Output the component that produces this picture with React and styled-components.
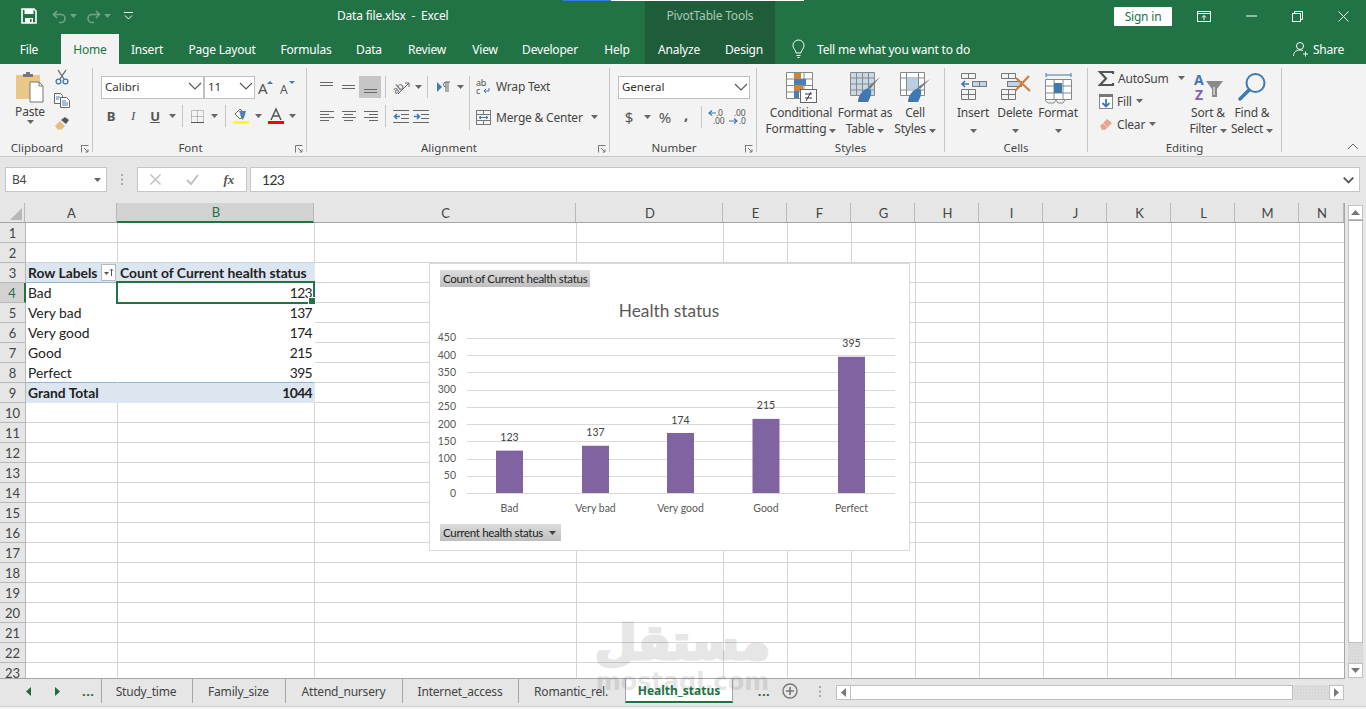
import React from "react";
import styled, { createGlobalStyle } from "styled-components";

const GREEN = "#217346";
const UI = '"Noto Sans", "Open Sans", sans-serif';
const CELL = 'Lato, "Liberation Sans", sans-serif';

const Global = createGlobalStyle`
  html, body { margin: 0; padding: 0; height: 100%; overflow: hidden; background: #f3f3f3; }
  * { box-sizing: border-box; }
  svg { overflow: visible; }
`;

const Page = styled.div`
  position: relative;
  width: 1366px;
  height: 709px;
  overflow: hidden;
  font-family: ${UI};
  font-size: 12px;
  letter-spacing: -0.2px;
  color: #444;
  display: flex;
  flex-direction: column;
`;

const LoadStrip = styled.div`
  position: absolute;
  top: 0;
  left: 563px;
  width: 241px;
  height: 1px;
  background: linear-gradient(90deg, #2a7fe0 0 48px, #fff 48px);
  z-index: 3;
`;

/* title bar */
const TitleBar = styled.div`
  height: 32px;
  background: ${GREEN};
  color: #fff;
  display: flex;
  align-items: center;
`;
const Qat = styled.div`
  width: 337px;
  display: flex;
  align-items: center;
  padding-left: 21px;
`;
const QatSlot = styled.span`
  width: ${(p) => p.$w}px;
  margin-left: ${(p) => p.$ml || 0}px;
  display: flex;
  justify-content: center;
`;
const DocTitle = styled.div`
  width: 308px;
  white-space: pre;
  padding-bottom: 2px;
`;
const Context = styled.div`
  width: 130px;
  height: 32px;
  background: #1e5c3a;
  color: #a9c9b6;
  display: flex;
  align-items: center;
  justify-content: center;
  padding-bottom: 2px;
`;
const SignIn = styled.div`
  margin-left: 339px;
  width: 58px;
  height: 19px;
  background: #fff;
  color: ${GREEN};
  border-radius: 1px;
  display: flex;
  align-items: center;
  justify-content: center;
`;
const WinBtn = styled.div`
  width: ${(p) => p.$w || 46}px;
  display: flex;
  justify-content: center;
`;

/* ribbon tabs */
const TabRow = styled.div`
  height: 32px;
  background: ${GREEN};
  color: #fff;
  display: flex;
  align-items: flex-end;
`;
const Tab = styled.div`
  width: ${(p) => p.$w}px;
  height: ${(p) => (p.$on ? 30 : 32)}px;
  padding-right: ${(p) => (p.$w === 61 ? 3 : 0)}px;
  padding-top: ${(p) => (p.$on ? 0 : 2)}px;
  background: ${(p) => (p.$on ? "#f3f3f3" : p.$ctx ? "#1e5c3a" : "transparent")};
  color: ${(p) => (p.$on ? GREEN : "#fff")};
  display: flex;
  align-items: center;
  justify-content: center;
  white-space: nowrap;
`;
const TellMe = styled.div`
  display: flex;
  align-items: center;
  height: 32px;
  padding-top: 2px;
  margin-left: 17px;
  gap: 12px;
`;
const Share = styled.div`
  display: flex;
  align-items: center;
  height: 32px;
  padding-top: 2px;
  margin-left: 323px;
  gap: 4px;
`;

/* ribbon */
const Ribbon = styled.div`
  height: 93px;
  background: #f3f3f3;
  border-bottom: 1px solid #c8c8c8;
  display: flex;
  padding-top: 4px;
  position: relative;
`;
const GroupBox = styled.section`
  width: ${(p) => p.$w}px;
  height: 84px;
  border-right: 1px solid #c6c6c6;
  display: flex;
  flex-direction: column;
`;
const GroupBody = styled.div`
  height: 72px;
  display: flex;
  padding-left: ${(p) => p.$pad || 0}px;
  padding-top: ${(p) => p.$top ?? 8}px;
`;
const GroupFoot = styled.div`
  height: 12px;
  display: flex;
  line-height: 16px;
`;
const GroupName = styled.div`
  flex: 1;
  text-align: center;
  font-size: 11.5px;
  letter-spacing: 0;
  white-space: nowrap;
`;
const Launcher = styled.div`
  width: 18px;
  height: 12px;
  padding-top: 5px;
  padding-left: 7px;
  display: flex;
  align-items: flex-start;
`;
const Collapse = styled.div`
  position: absolute;
  right: 7px;
  bottom: 2px;
`;
const Rows = styled.div`
  display: flex;
  flex-direction: column;
  gap: ${(p) => p.$gap ?? 8}px;
  margin-top: ${(p) => p.$mt || 0}px;
`;
const Row = styled.div`
  display: flex;
  align-items: center;
  height: 22px;
`;
const Slot = styled.span`
  width: ${(p) => p.$w}px;
  height: 22px;
  flex: none;
  display: flex;
  align-items: center;
  justify-content: center;
  padding-left: ${(p) => p.$pl || 0}px;
  padding-bottom: ${(p) => p.$pb || 0}px;
  background: ${(p) => (p.$on ? "#c6c6c6" : "transparent")};
`;
const Sep = styled.span`
  width: 1px;
  height: ${(p) => p.$h || 22}px;
  background: #c6c6c6;
  flex: none;
  margin: 0 ${(p) => p.$m ?? 4}px;
`;
const Select = styled.div`
  width: ${(p) => p.$w}px;
  height: 23px;
  flex: none;
  margin-left: ${(p) => p.$ml || 0}px;
  background: #fff;
  border: 1px solid #c0c0c0;
  color: #333;
  display: flex;
  align-items: center;
  justify-content: space-between;
  padding: 0 1px 2px 3px;
  font-size: 11.5px;
  letter-spacing: 0;
`;
const Big = styled.div`
  width: ${(p) => p.$w}px;
  flex: none;
  display: flex;
  flex-direction: column;
  align-items: center;
  white-space: nowrap;
  line-height: 16px;
  color: #444;
  padding-top: ${(p) => p.$top || 0}px;
`;
const BigIcon = styled.div`
  height: 33px;
  display: flex;
  align-items: flex-start;
  justify-content: center;
`;
const SmallCol = styled.div`
  display: flex;
  flex-direction: column;
  gap: 1px;
  width: ${(p) => p.$w}px;
  flex: none;
  margin-top: ${(p) => p.$mt || 0}px;
  margin-left: ${(p) => p.$ml || 0}px;
`;
const TextRow = styled.div`
  display: flex;
  align-items: center;
  height: 22px;
  gap: ${(p) => p.$gap ?? 4}px;
  white-space: nowrap;
`;
const Name = styled.span`
  white-space: nowrap;
`;

/* formula bar */
const FormulaBar = styled.div`
  height: 46px;
  background: #e6e6e6;
  display: flex;
  align-items: center;
  padding: 0 6px 1px 5px;
`;
const FxBox = styled.div`
  height: 25px;
  background: #fff;
  border: 1px solid #c6c6c6;
  display: flex;
  align-items: center;
`;
const NameBox = styled(FxBox)`
  width: 102px;
  justify-content: space-between;
  padding: 0 5px 0 6px;
  color: #444;
`;
const Grip = styled.div`
  width: 30px;
  display: flex;
  justify-content: center;
`;
const Buttons = styled(FxBox)`
  width: 110px;
  justify-content: space-between;
  padding: 0 12px;
  margin-right: 3px;
`;
const Input = styled(FxBox)`
  flex: 1;
  padding: 0 5px 0 11px;
  justify-content: space-between;
  font-family: ${CELL};
  font-size: 13.8px;
  letter-spacing: -0.6px;
  color: #333;
`;

/* sheet */
const SheetArea = styled.div`
  height: 476px;
  display: flex;
  background: #e6e6e6;
  position: relative;
`;
const Grid = styled.div`
  width: 1345px;
  height: 476px;
  overflow: hidden;
  background: #fff;
  border-right: 1px solid #a6a6a6;
  border-bottom: 1px solid #a6a6a6;
  font-family: ${CELL};
  font-size: 13.85px;
  letter-spacing: 0;
  color: #222;
`;
const HeadRow = styled.div`
  display: flex;
  height: 20px;
  background: #e6e6e6;
  border-bottom: 1px solid #a6a6a6;
`;
const Corner = styled.div`
  width: 26px;
  border-right: 1px solid #b8b8b8;
  display: flex;
  align-items: flex-end;
  justify-content: flex-end;
  padding: 0 2px 2px 0;
`;
const ColHead = styled.div`
  width: ${(p) => p.$w}px;
  flex: none;
  height: ${(p) => (p.$on ? 20 : 19)}px;
  display: flex;
  align-items: center;
  justify-content: center;
  padding-left: 2px;
  font-size: 13px;
  color: ${(p) => (p.$on ? GREEN : "#444")};
  background: ${(p) => (p.$on ? "#d2d2d2" : "transparent")};
  border-right: 1px solid #b8b8b8;
  border-bottom: ${(p) => (p.$on ? `2px solid ${GREEN}` : "none")};
`;
const SheetRow = styled.div`
  display: flex;
  height: 20px;
  flex: none;
`;
const RowHead = styled.div`
  width: 26px;
  flex: none;
  display: flex;
  align-items: center;
  justify-content: center;
  font-size: 13px;
  color: ${(p) => (p.$on ? GREEN : "#444")};
  background: ${(p) => (p.$on ? "#d2d2d2" : "#e6e6e6")};
  border-right: ${(p) => (p.$on ? `2px solid ${GREEN}` : "1px solid #b8b8b8")};
  border-bottom: 1px solid #b8b8b8;
`;
const Cell = styled.div`
  position: relative;
  width: ${(p) => p.$w}px;
  flex: none;
  display: flex;
  align-items: center;
  justify-content: ${(p) => (p.$right ? "flex-end" : "space-between")};
  padding: 0 2px;
  white-space: nowrap;
  letter-spacing: ${(p) => (p.$right ? "-0.6px" : "0")};
  font-weight: ${(p) => (p.$bold ? 700 : 400)};
  background: ${(p) => (p.$fill ? "#dce6f1" : "#fff")};
  border-right: 1px solid ${(p) => (p.$pivot ? "transparent" : "#d4d4d4")};
  border-bottom: 1px solid ${(p) => p.$line || (p.$pivot ? "transparent" : "#d4d4d4")};
`;
const Selection = styled.div`
  position: absolute;
  inset: -2px -1px -2px -2px;
  border: 2px solid ${GREEN};
  z-index: 1;
  &::after {
    content: "";
    position: absolute;
    right: -3px;
    bottom: -3px;
    width: 6px;
    height: 6px;
    background: ${GREEN};
    border: 1px solid #fff;
  }
`;
const FilterBtn = styled.span`
  width: 15px;
  height: 17px;
  margin-right: -1px;
  background: #fff;
  border: 1px solid #b8b8b8;
  display: flex;
  align-items: center;
  justify-content: center;
`;

/* chart */
const ChartBox = styled.div`
  position: absolute;
  left: 429px;
  top: 60px;
  width: 481px;
  height: 288px;
  background: #fff;
  border: 1px solid #d9d9d9;
  display: flex;
  flex-direction: column;
  padding: 6px 9px 0 10px;
  z-index: 2;
  letter-spacing: 0;
`;
const FieldBtn = styled.div`
  align-self: flex-start;
  width: ${(p) => p.$w}px;
  height: 17px;
  background: linear-gradient(#dcdcdc, #bfbfbf);
  display: flex;
  align-items: center;
  gap: 6px;
  padding-left: 3px;
  font-family: ${CELL};
  font-size: 11.5px;
  letter-spacing: -0.3px;
  color: #222;
  white-space: nowrap;
`;
const ChartTitle = styled.div`
  height: 20px;
  margin-top: 14px;
  padding-right: 2px;
  text-align: center;
  line-height: 20px;
  font-family: ${CELL};
  font-size: 17.3px;
  color: #595959;
`;
const Plot = styled.svg`
  display: block;
  margin: 9px -9px 6px -10px;
  font-family: ${CELL};
  font-size: 10.5px;
  fill: #595959;
`;

/* vertical scrollbar */
const VScroll = styled.div`
  width: 21px;
  display: flex;
  flex-direction: column;
  padding: 2px 3px 1px;
`;
const ScrollBtn = styled.div`
  width: ${(p) => p.$w || 15}px;
  height: ${(p) => p.$h || 15}px;
  flex: none;
  background: #fff;
  border: 1px solid #c0c0c0;
  display: flex;
  align-items: center;
  justify-content: center;
`;
const VThumb = styled.div`
  height: 423px;
  background: #fff;
  border: 1px solid #c0c0c0;
  border-top: 1px solid #a6a6a6;
`;
const Track = styled.div`
  flex: 1;
  background-color: #dcdcdc;
  background-image: radial-gradient(#cfcfcf 0.6px, transparent 0.7px);
  background-size: 3px 3px;
`;

/* sheet tabs */
const TabBar = styled.div`
  height: 27px;
  background: #e6e6e6;
  display: flex;
  align-items: flex-start;
`;
const NavBox = styled.div`
  width: 101px;
  height: 24px;
  display: flex;
  align-items: center;
  padding-left: 26px;
  gap: 22px;
  color: #1e6b3c;
`;
const Dots = styled.span`
  font-weight: 700;
  font-size: 13px;
  color: #1e6b3c;
  line-height: 1;
  letter-spacing: 0.5px;
`;
const SheetTab = styled.div`
  width: ${(p) => p.$w}px;
  height: 24px;
  flex: none;
  display: flex;
  align-items: center;
  justify-content: center;
  padding-right: ${(p) => (p.$on ? 0 : 2)}px;
  white-space: nowrap;
  color: ${(p) => (p.$on ? GREEN : "#444")};
  background: ${(p) => (p.$on ? "#fff" : "transparent")};
  font-weight: ${(p) => (p.$on ? 700 : 400)};
  letter-spacing: ${(p) => (p.$on ? "0" : "-0.2px")};
  border-left: 1px solid ${(p) => (p.$first || p.$on ? "#a6a6a6" : "transparent")};
  border-right: 1px solid ${(p) => (p.$noSep ? "transparent" : "#a6a6a6")};
  border-bottom: ${(p) => (p.$on ? `2px solid ${GREEN}` : "none")};
`;
const TabTools = styled.div`
  display: flex;
  align-items: center;
  height: 24px;
`;
const HScroll = styled.div`
  display: flex;
  margin-top: 6px;
  width: 508px;
  height: 15px;
`;
const HThumb = styled.div`
  width: 442px;
  background: #fff;
  border: 1px solid #c0c0c0;
  border-left: none;
`;
const Foot = styled.div`
  height: 3px;
  background: #f3f3f3;
  border-top: 1px solid #d0d0d0;
`;

/* watermark */
const Watermark = styled.div`
  position: absolute;
  left: 580px;
  top: 612px;
  width: 205px;
  display: flex;
  flex-direction: column;
  align-items: center;
  pointer-events: none;
  z-index: 4;
  color: #464646;
  opacity: 0.13;
  font-family: "DejaVu Sans", sans-serif;
  font-weight: 700;
  letter-spacing: 0;
`;
const WmArabic = styled.div`
  font-size: 48px;
  line-height: 60px;
  -webkit-text-stroke: 3px #464646;
  paint-order: stroke fill;
`;
const WmLatin = styled.div`
  font-size: 24px;
  line-height: 28px;
  margin-top: -4px;
`;

/* drawings */
const Caret = ({ c = "#666" }) => (
  <svg width="7" height="4" viewBox="0 0 7 4"><path d="M0 0h7L3.5 4z" fill={c} /></svg>
);
const Chevron = ({ w = 14, sw = 1.1 }) => (
  <svg width={w} height="8" viewBox="0 0 14 8"><path d="M1 1l6 6 6-6" fill="none" stroke="#555" strokeWidth={sw} /></svg>
);
const SaveIcon = () => (
  <svg width="16" height="16" viewBox="0 0 16 16">
    <path d="M1 1h12l2 2v12H1z" fill="none" stroke="#fff" strokeWidth="1.6" />
    <rect x="3.5" y="1" width="9" height="5" fill="#fff" />
    <rect x="4" y="10" width="8" height="5" fill="#fff" />
    <rect x="9" y="11" width="1.6" height="3" fill={GREEN} />
  </svg>
);
const Undo = ({ flip }) => (
  <svg width="15" height="13" viewBox="0 0 15 13" style={flip ? { transform: "scaleX(-1)" } : undefined}>
    <path d="M5 1L1.5 4.5 5 8M2 4.5h7a4 4 0 0 1 0 8H7" fill="none" stroke="#6fa587" strokeWidth="1.6" />
  </svg>
);
const Customize = () => (
  <svg width="9" height="8" viewBox="0 0 9 8">
    <path d="M0 .5h9" stroke="#fff" />
    <path d="M1 3.5l3.5 3.5L8 3.5" fill="none" stroke="#fff" />
  </svg>
);
const RibbonDisplay = () => (
  <svg width="14" height="11" viewBox="0 0 14 11" fill="none" stroke="#fff">
    <rect x=".5" y=".5" width="13" height="10" />
    <path d="M1 2.5h12M7 9V4.500M5 6.500l2-2 2 2" />
  </svg>
);
const Minimize = () => <svg width="11" height="2" viewBox="0 0 11 2"><path d="M0 1h11" stroke="#fff" /></svg>;
const Restore = () => (
  <svg width="11" height="11" viewBox="0 0 11 11" fill="none" stroke="#fff">
    <rect x=".5" y="2.5" width="8" height="8" />
    <path d="M2.5 2.5v-2h8v8h-2" />
  </svg>
);
const CloseX = () => <svg width="11" height="11" viewBox="0 0 11 11"><path d="M.5.5l10 10M10.5.5l-10 10" stroke="#fff" /></svg>;
const Bulb = () => (
  <svg width="13" height="18" viewBox="0 0 13 18" fill="none" stroke="#fff">
    <path d="M4 13c0-3-3-4-3-7.5a5.500 5.500 0 0 1 11 0C12 9 9 10 9 13zM4.500 15.500h4M5.500 17.500h2" />
  </svg>
);
const Person = () => (
  <svg width="16" height="16" viewBox="0 0 16 16" fill="none" stroke="#fff">
    <circle cx="7" cy="5" r="3.5" />
    <path d="M.5 15c0-3.500 2.500-6 6.500-6 1 0 2 .2 2.800.6M12.500 10.500v5M10 13h5" />
  </svg>
);
const PasteIcon = () => (
  <svg width="30" height="32" viewBox="0 0 30 32">
    <rect x="1" y="4" width="24" height="24" rx="1" fill="#e9c887" />
    <path d="M8 3h3V1h4v2h3v3H8z" fill="#777" />
    <path d="M15 11h9l4 4v16H15z" fill="#fff" stroke="#777" />
    <path d="M24 11v4h4" fill="none" stroke="#777" />
  </svg>
);
const CutIcon = () => (
  <svg width="14" height="16" viewBox="0 0 14 16" fill="none">
    <path d="M3 1l6 9M11 1L5 10" stroke="#666" strokeWidth="1.3" />
    <circle cx="3.5" cy="12.5" r="2.4" stroke="#3f79b3" strokeWidth="1.3" />
    <circle cx="10.5" cy="12.5" r="2.4" stroke="#3f79b3" strokeWidth="1.3" />
  </svg>
);
const CopyIcon = () => (
  <svg width="16" height="15" viewBox="0 0 16 15" fill="#fff" stroke="#666">
    <path d="M.5.500h6l2 2v8h-8z" />
    <path d="M6.500 4.500h6l3 3v7h-9z" />
    <path d="M2 4h4M2 6h3M8 8h4M8 10h6M8 12h6" stroke="#4a7fb5" />
  </svg>
);
const PainterIcon = () => (
  <svg width="16" height="15" viewBox="0 0 16 15">
    <path d="M1 10l5-5 5 5-4 4-2-1-1 1z" fill="#e5bf7a" />
    <path d="M7 4l4-3 4 3-3 4z" fill="#555" />
  </svg>
);
const FontGrow = ({ small }) => (
  <svg width="16" height="15" viewBox="0 0 16 15">
    <text x="0" y="14" fontFamily="Noto Sans" fontSize={small ? 12 : 15} fill="#555">A</text>
    <path d={small ? "M9 1h6l-3 3z" : "M9 4h6l-3-3z"} fill="#3f79b3" />
  </svg>
);
const Letter = styled.span`
  font-family: ${(p) => (p.$serif ? '"Liberation Serif", serif' : UI)};
  font-weight: ${(p) => (p.$b ? 700 : 400)};
  font-style: ${(p) => (p.$i ? "italic" : "normal")};
  text-decoration: ${(p) => (p.$u ? "underline" : "none")};
  font-size: ${(p) => p.$size || 13}px;
  color: #555;
`;
const BorderIcon = () => (
  <svg width="13" height="13" viewBox="0 0 13 13" fill="none" stroke="#888" strokeDasharray="1 1">
    <path d="M.5.500h12v12h-12zM6.500.500v12M.5 6.500h12" />
    <path d="M0 12.500h13" stroke="#555" strokeDasharray="none" />
  </svg>
);
const FillIcon = () => (
  <svg width="16" height="16" viewBox="0 0 16 16">
    <path d="M2 6l5-5 5 5-5 5z" fill="#fff" stroke="#666" />
    <path d="M6 3h7l-2 7-2 2z" fill="#3f79b3" opacity=".9" />
    <rect y="13" width="16" height="3" fill="#ffff00" />
  </svg>
);
const FontColor = () => (
  <svg width="16" height="16" viewBox="0 0 16 16">
    <path d="M3 12L8 1l5 11M5 8h6" fill="none" stroke="#555" strokeWidth="1.5" />
    <rect y="13" width="16" height="3" fill="#ff0000" />
  </svg>
);
const Lines = ({ d }) => (
  <svg width="15" height="13" viewBox="0 0 15 13"><path d={d} stroke="#666" fill="none" /></svg>
);
const Orientation = () => (
  <svg width="18" height="17" viewBox="0 0 18 17">
    <text x="0" y="12" fontFamily="Noto Sans" fontSize="10" fill="#666" transform="rotate(-40 6 10)">ab</text>
    <path d="M5 15L16 4M12 4h4v4" fill="none" stroke="#666" />
  </svg>
);
const Rtl = () => (
  <svg width="14" height="12" viewBox="0 0 14 12">
    <path d="M0 1l5 5-5 5z" fill="#3f79b3" />
    <path d="M9 11V1h4M11 11V1M9 1a2.500 2.500 0 0 0 0 5" fill="none" stroke="#666" />
  </svg>
);
const Indent = ({ out }) => (
  <svg width="16" height="13" viewBox="0 0 16 13">
    <path d="M0 .5h16M8 4.500h8M8 8.500h8M0 12.500h16" stroke="#666" />
    <path d={out ? "M7 6.500H2M4 4L1.500 6.500 4 9" : "M1 6.500h5M4 4l2.500 2.500L4 9"} stroke="#3f79b3" strokeWidth="1.5" fill="none" />
  </svg>
);
const WrapIcon = () => (
  <svg width="14" height="15" viewBox="0 0 14 15">
    <text x="0" y="7" fontFamily="Noto Sans" fontSize="9" fill="#555">ab</text>
    <text x="0" y="15" fontFamily="Noto Sans" fontSize="9" fill="#555">c</text>
    <path d="M13 9v3H8M10 10l-2 2 2 2" fill="none" stroke="#3f79b3" />
  </svg>
);
const MergeIcon = () => (
  <svg width="15" height="15" viewBox="0 0 15 15" fill="none" stroke="#777">
    <rect x=".5" y=".5" width="14" height="14" />
    <path d="M.5 4.500h14M.5 10.500h14M7.500 1v3M7.500 11v3" />
    <path d="M3 7.500h9M3 7.500l2-1.500M3 7.500l2 1.500M12 7.500l-2-1.500M12 7.500l-2 1.500" stroke="#3f79b3" />
  </svg>
);
const DecDec = ({ more }) => (
  <svg width="20" height="16" viewBox="0 0 20 16">
    <text x={more ? 5 : 8} y="7" fontFamily="Noto Sans" fontSize="8.5" fill="#555">{more ? ".00" : ".0"}</text>
    <text x={more ? 10 : 5} y="15" fontFamily="Noto Sans" fontSize="8.5" fill="#555">{more ? ".0" : ".00"}</text>
    <path d={more ? "M0 12h8M5 9.500L8 12l-3 2.500" : "M8 4H1M4 1.500L1 4l3 2.500"} fill="none" stroke="#3f79b3" strokeWidth="1.2" />
  </svg>
);
const CondIcon = () => (
  <svg width="31" height="31" viewBox="0 0 31 31">
    <path d="M.5.500h26v26H.5zM.5 7h26M.5 13.500h26M.5 20h26M9 .5v26M18 .5v26" fill="#fff" stroke="#888" />
    <rect x="8" y="1" width="7" height="6" fill="#c9843f" />
    <rect x="8" y="7" width="12" height="6" fill="#4a7fb5" />
    <rect x="8" y="13" width="9" height="6" fill="#c9843f" />
    <rect x="8" y="19" width="5" height="7" fill="#4a7fb5" />
    <rect x="14.5" y="17.5" width="16" height="13" fill="#fff" stroke="#666" />
    <path d="M19 22h7M19 26h7M25 20l-5 9" stroke="#333" />
  </svg>
);
const TableIcon = () => (
  <svg width="31" height="31" viewBox="0 0 31 31">
    <path d="M.5.500h24v23H.5zM.5 6h24M.5 12h24M.5 18h24M6.500.5v23M12.500.5v23M18.500.5v23" fill="#c7d8e8" stroke="#888" />
    <path d="M30 5L20 17l-2-2z" fill="#777" />
    <path d="M8 30c0-7 5-12 10-14l3 2c1 4-1 8-3 12z" fill="#3f79b3" />
  </svg>
);
const StylesIcon = () => (
  <svg width="31" height="31" viewBox="0 0 31 31">
    <path d="M.5.500h24v23H.5zM.5 6h24M.5 18h24M6.500.5v23M18.500.5v23" fill="#fff" stroke="#888" />
    <rect x="7" y="6.5" width="11" height="11" fill="#b9cfe4" />
    <path d="M30 7L20 17l-2-2z" fill="#777" />
    <path d="M8 30c0-7 5-12 10-14l3 2c1 4-1 8-3 12z" fill="#3f79b3" />
  </svg>
);
const InsertIcon = () => (
  <svg width="27" height="29" viewBox="0 0 27 29" fill="none" stroke="#777">
    <path d="M1.500 1.500h14v5h-14zM8.500 1.500v5M1.500 17.500h14v10h-14zM1.500 22.500h14M8.500 17.500v10" />
    <rect x="12.5" y="9.5" width="14" height="5" fill="#c0d4e6" />
    <path d="M19.500 9.500v5" />
    <path d="M9 12H2M5 9l-3 3 3 3" stroke="#3f79b3" strokeWidth="1.6" />
  </svg>
);
const DeleteIcon = () => (
  <svg width="31" height="29" viewBox="0 0 31 29" fill="none" stroke="#777">
    <path d="M1.500 1.500h14v5h-14zM8.500 1.500v5M1.500 17.500h14v10h-14zM1.500 22.500h14M8.500 17.500v10" />
    <rect x="7.5" y="9.5" width="14" height="5" fill="#c0d4e6" />
    <path d="M16 6l14 13M29 4L15 19" stroke="#d17f3e" strokeWidth="2.2" />
  </svg>
);
const FormatIcon = () => (
  <svg width="29" height="31" viewBox="0 0 29 31" fill="none" stroke="#888">
    <path d="M2 3h25M2 1v4M27 1v4" stroke="#3f79b3" />
    <path d="M1.500 7.500h26v20h-26zM1.500 14h26M1.500 21h26M10 7.500v20M19 7.500v20" fill="#fff" />
    <rect x="10" y="11" width="8" height="10" fill="#3f79b3" stroke="none" />
    <path d="M1 28l3 3h6l2-3M12 28l2 3h5l2-3" />
  </svg>
);
const Sigma = () => (
  <svg width="15" height="15" viewBox="0 0 15 15"><path d="M14 3V1H1l6 6.500L1 14h13v-2" fill="none" stroke="#555" strokeWidth="2.2" /></svg>
);
const FillDown = () => (
  <svg width="14" height="15" viewBox="0 0 14 15">
    <rect x=".5" y=".5" width="13" height="14" fill="#fff" stroke="#888" />
    <rect width="14" height="3" fill="#777" />
    <path d="M7 5v7M3.500 9L7 12.500 10.500 9" fill="none" stroke="#3f79b3" strokeWidth="1.8" />
  </svg>
);
const Eraser = () => (
  <svg width="14" height="13" viewBox="0 0 14 13">
    <path d="M1 8l7-7 5 4-7 7H3z" fill="#eba58f" />
    <path d="M4 5l4 4" stroke="#fff" strokeDasharray="1 1" />
  </svg>
);
const SortIcon = () => (
  <svg width="32" height="29" viewBox="0 0 32 29">
    <text x="2" y="13" fontFamily="Noto Sans" fontWeight="700" fontSize="14" fill="#3f79b3">A</text>
    <text x="3" y="28" fontFamily="Noto Sans" fontWeight="700" fontSize="14" fill="#8a5fb0">Z</text>
    <path d="M14 9h17l-6 8v8h-5v-8z" fill="#8a8a8a" />
    <path d="M22 15v8" stroke="#fff" />
  </svg>
);
const FindIcon = () => (
  <svg width="29" height="29" viewBox="0 0 29 29" fill="none">
    <circle cx="17.5" cy="11" r="9" stroke="#3f79b3" strokeWidth="2" />
    <path d="M11 18L2 27" stroke="#3f79b3" strokeWidth="3.5" strokeLinecap="round" />
  </svg>
);
const LauncherIcon = () => (
  <svg width="8" height="8" viewBox="0 0 8 8" fill="none" stroke="#777">
    <path d="M.5 7.500v-7h7" />
    <path d="M3 3l4 4M7 4.500V7H4.500" />
  </svg>
);
const Up = () => <svg width="12" height="7" viewBox="0 0 12 7"><path d="M1 6l5-5 5 5" fill="none" stroke="#666" /></svg>;
const Tri = ({ dir }) => {
  const d = { up: "M0 5L4.500 0 9 5z", down: "M0 0l4.500 5L9 0z", left: "M5 0v9L0 4.500z", right: "M0 0v9l5-4.500z" }[dir];
  const w = dir === "up" || dir === "down" ? 9 : 5;
  const h = dir === "up" || dir === "down" ? 5 : 9;
  return <svg width={w} height={h} viewBox={`0 0 ${w} ${h}`}><path d={d} fill="#777" /></svg>;
};
const NavArrow = ({ right }) => (
  <svg width="6" height="9" viewBox="0 0 6 9"><path d={right ? "M1 0v9l5-4.500z" : "M5 0v9L0 4.500z"} fill="#1e6b3c" /></svg>
);
const Plus = () => (
  <svg width="16" height="16" viewBox="0 0 16 16" fill="none" stroke="#777">
    <circle cx="8" cy="8" r="7" strokeWidth="1.4" />
    <path d="M8 4v8M4 8h8" strokeWidth="1.6" />
  </svg>
);
const GripDots = () => (
  <svg width="3" height="11" viewBox="0 0 3 11"><path d="M0 0h2v2H0zM0 4.500h2v2H0zM0 9h2v2H0z" fill="#aaa" /></svg>
);

/* data */
const TABS = [
  ["File", 61], ["Home", 58, true], ["Insert", 56], ["Page Layout", 94], ["Formulas", 74], ["Data", 52],
  ["Review", 64], ["View", 52], ["Developer", 78], ["Help", 56],
];
const COLS = [["A", 92], ["B", 197], ["C", 262], ["D", 147], ["E", 64], ["F", 64], ["G", 64], ["H", 64], ["I", 64], ["J", 64], ["K", 64], ["L", 64], ["M", 64], ["N", 45]];
const PIVOT = { 4: ["Bad", 123], 5: ["Very bad", 137], 6: ["Very good", 174], 7: ["Good", 215], 8: ["Perfect", 395] };
const SHEETS = [["Study_time", 92], ["Family_size", 93], ["Attend_nursery", 117], ["Internet_access", 116]];
const BARS = [["Bad", 123, 509.5], ["Very bad", 137, 595.5], ["Very good", 174, 680.5], ["Good", 215, 766], ["Perfect", 395, 851.5]];
const TICKS = [450, 400, 350, 300, 250, 200, 150, 100, 50, 0];

function Group({ w, name, launcher, pad, top, children }) {
  return (
    <GroupBox $w={w}>
      <GroupBody $pad={pad} $top={top}>{children}</GroupBody>
      <GroupFoot>
        <GroupName>{name}</GroupName>
        {launcher && <Launcher><LauncherIcon /></Launcher>}
      </GroupFoot>
    </GroupBox>
  );
}

function BigButton({ w, icon, first, second, caret, top }) {
  return (
    <Big $w={w} $top={top}>
      <BigIcon>{icon}</BigIcon>
      <Name>{first}</Name>
      <Name>{second} {caret && <Caret />}</Name>
    </Big>
  );
}

function SheetRows() {
  const rows = [];
  for (let r = 1; r <= 23; r++) {
    const isHead = r === 3;
    const isTotal = r === 9;
    const isBody = !!PIVOT[r];
    const inPivot = isHead || isTotal || isBody;
    const line = isHead || r === 8 ? "#95b3d7" : undefined;
    rows.push(
      <SheetRow key={r}>
        <RowHead $on={r === 4}>{r}</RowHead>
        {COLS.map(([c, w]) => {
          if (inPivot && c === "A") {
            return (
              <Cell key={c} $w={w} $pivot $fill={isHead || isTotal} $bold={isHead || isTotal} $line={line}>
                {isHead && <>Row Labels<FilterBtn>
                  <svg width="11" height="9" viewBox="0 0 11 9"><path d="M1 4h5L3.5 7z" fill="#555" /><path d="M8.500 8V1M7 2.500L8.500 1 10 2.500" stroke="#555" fill="none" /></svg>
                </FilterBtn></>}
                {isTotal && "Grand Total"}
                {isBody && PIVOT[r][0]}
              </Cell>
            );
          }
          if (inPivot && c === "B") {
            return (
              <Cell key={c} $w={w} $pivot $right={!isHead} $fill={isHead || isTotal} $bold={isHead || isTotal} $line={line}>
                {isHead && "Count of Current health status"}
                {isTotal && 1044}
                {isBody && PIVOT[r][1]}
                {r === 4 && <Selection />}
              </Cell>
            );
          }
          return <Cell key={c} $w={w} />;
        })}
      </SheetRow>
    );
  }
  return rows;
}

function HealthChart() {
  const ox = 430;
  const oy = 330;
  const base = 493;
  const yOf = (v) => base - v * 0.3448;
  return (
    <ChartBox>
      <FieldBtn $w={150}>Count of Current health status</FieldBtn>
      <ChartTitle>Health status</ChartTitle>
      <Plot width="479" height="188" viewBox="0 0 479 188">
        {TICKS.map((t) => (
          <g key={t}>
            <path d={`M${467 - ox} ${Math.round(yOf(t)) - oy + 0.5}H${895 - ox}`} stroke="#d9d9d9" />
            <text x={456 - ox} y={yOf(t) - oy + 3.5} textAnchor="end">{t}</text>
          </g>
        ))}
        {BARS.map(([label, v, cx]) => (
          <g key={label}>
            <rect x={cx - 13.5 - ox} y={yOf(v) - oy} width="27" height={v * 0.3448} fill="#8064a2" />
            <text x={cx - ox} y={yOf(v) - oy - 9.5} textAnchor="middle" fill="#404040">{v}</text>
            <text x={cx - ox} y={182} textAnchor="middle">{label}</text>
          </g>
        ))}
      </Plot>
      <FieldBtn $w={121}>Current health status <Caret c="#444" /></FieldBtn>
    </ChartBox>
  );
}

export default function App() {
  return (
    <Page>
      <Global />
      <LoadStrip />
      <TitleBar>
        <Qat>
          <QatSlot $w={16}><SaveIcon /></QatSlot>
          <QatSlot $w={22} $ml={11}><Undo /></QatSlot>
          <QatSlot $w={6}><Caret c="#6fa587" /></QatSlot>
          <QatSlot $w={24} $ml={5}><Undo flip /></QatSlot>
          <QatSlot $w={4}><Caret c="#6fa587" /></QatSlot>
          <QatSlot $w={38}><Customize /></QatSlot>
        </Qat>
        <DocTitle>Data file.xlsx  -  Excel</DocTitle>
        <Context>PivotTable Tools</Context>
        <SignIn>Sign in</SignIn>
        <WinBtn $w={64}><RibbonDisplay /></WinBtn>
        <WinBtn $w={30}><Minimize /></WinBtn>
        <WinBtn $w={62}><Restore /></WinBtn>
        <WinBtn $w={30}><CloseX /></WinBtn>
      </TitleBar>
      <TabRow>
        {TABS.map(([t, w, on]) => <Tab key={t} $w={w} $on={on}>{t}</Tab>)}
        <Tab $w={68} $ctx>Analyze</Tab>
        <Tab $w={62} $ctx>Design</Tab>
        <TellMe><Bulb />Tell me what you want to do</TellMe>
        <Share><Person />Share</Share>
      </TabRow>
      <Ribbon>
        <Group w={93} name="Clipboard" launcher pad={15} top={3}>
          <Big $w={30}>
            <BigIcon><PasteIcon /></BigIcon>
            <Name>Paste</Name>
            <Caret />
          </Big>
          <SmallCol $w={34} $mt={-5} $ml={2}>
            <Slot $w={30}><CutIcon /></Slot>
            <Slot $w={30}><CopyIcon /></Slot>
            <Slot $w={30}><PainterIcon /></Slot>
          </SmallCol>
        </Group>
        <Group w={214} name="Font" launcher pad={7}>
          <Rows $gap={7}>
            <Row>
              <Select $w={103} $ml={1}>Calibri<Chevron /></Select>
              <Select $w={51}>11<Chevron /></Select>
              <Slot $w={22}><FontGrow /></Slot>
              <Slot $w={22}><FontGrow small /></Slot>
            </Row>
            <Row>
              <Slot $w={22}><Letter $b>B</Letter></Slot>
              <Slot $w={22}><Letter $i $serif>I</Letter></Slot>
              <Slot $w={22}><Letter $u $b>U</Letter></Slot>
              <Slot $w={12}><Caret /></Slot>
              <Sep />
              <Slot $w={20}><BorderIcon /></Slot>
              <Slot $w={14}><Caret /></Slot>
              <Sep />
              <Slot $w={22}><FillIcon /></Slot>
              <Slot $w={12}><Caret /></Slot>
              <Slot $w={24}><FontColor /></Slot>
              <Slot $w={8}><Caret /></Slot>
            </Row>
          </Rows>
        </Group>
        <Group w={303} name="Alignment" launcher pad={8}>
          <Rows $gap={7}>
            <Row>
              <Slot $w={22}><Lines d="M1 1.500h13M1 4.500h13" /></Slot>
              <Slot $w={22}><Lines d="M1 4.500h13M1 7.500h13" /></Slot>
              <Slot $w={22} $on><Lines d="M1 8.500h13M1 11.500h13" /></Slot>
              <Sep />
              <Slot $w={24}><Orientation /></Slot>
              <Slot $w={8}><Caret /></Slot>
              <Sep $m={5} />
              <Slot $w={22}><Rtl /></Slot>
              <Slot $w={10}><Caret /></Slot>
            </Row>
            <Row>
              <Slot $w={22}><Lines d="M1 1.500h14M1 4.500h9M1 7.500h14M1 10.500h9" /></Slot>
              <Slot $w={22}><Lines d="M1 1.500h14M3 4.500h9M1 7.500h14M3 10.500h9" /></Slot>
              <Slot $w={22}><Lines d="M1 1.500h14M6 4.500h9M1 7.500h14M6 10.500h9" /></Slot>
              <Sep />
              <Slot $w={22}><Indent out /></Slot>
              <Slot $w={18}><Indent /></Slot>
            </Row>
          </Rows>
          <Sep $h={54} $m={4} />
          <Rows $gap={9} $mt={-1}>
            <TextRow><Slot $w={18}><WrapIcon /></Slot>Wrap Text</TextRow>
            <TextRow><Slot $w={18}><MergeIcon /></Slot>Merge &amp; Center<Slot $w={16}><Caret /></Slot></TextRow>
          </Rows>
        </Group>
        <Group w={147} name="Number" launcher pad={8}>
          <Rows $gap={7}>
            <Select $w={132}>General<Chevron /></Select>
            <Row>
              <Slot $w={22}><Letter $size={15}>$</Letter></Slot>
              <Slot $w={14}><Caret /></Slot>
              <Slot $w={22}><Letter $size={15}>%</Letter></Slot>
              <Slot $w={20} $pb={7}><Letter $b $size={15}>,</Letter></Slot>
              <Sep $m={5} />
              <Slot $w={22}><DecDec /></Slot>
              <Slot $w={20}><DecDec more /></Slot>
            </Row>
          </Rows>
        </Group>
        <Group w={188} name="Styles" pad={5} top={4}>
          <BigButton w={78} icon={<CondIcon />} first="Conditional" second="Formatting" caret />
          <BigButton w={50} icon={<TableIcon />} first="Format as" second="Table" caret />
          <BigButton w={50} icon={<StylesIcon />} first="Cell" second="Styles" caret />
        </Group>
        <Group w={143} name="Cells" pad={7} top={4}>
          <BigButton w={42} icon={<InsertIcon />} first="Insert" second="" caret />
          <BigButton w={42} icon={<DeleteIcon />} first="Delete" second="" caret />
          <BigButton w={44} icon={<FormatIcon />} first="Format" second="" caret />
        </Group>
        <Group w={194} name="Editing" pad={11} top={0}>
          <SmallCol $w={87} $mt={-1}>
            <TextRow><Sigma />AutoSum <Slot $w={18}><Caret /></Slot></TextRow>
            <TextRow><FillDown />Fill <Caret /></TextRow>
            <TextRow><Eraser />Clear <Caret /></TextRow>
          </SmallCol>
          <BigButton w={44} top={4} icon={<SortIcon />} first="Sort &" second="Filter" caret />
          <BigButton w={44} top={4} icon={<FindIcon />} first="Find &" second="Select" caret />
        </Group>
        <Collapse><Up /></Collapse>
      </Ribbon>
      <FormulaBar>
        <NameBox>B4<Caret /></NameBox>
        <Grip><GripDots /></Grip>
        <Buttons>
          <svg width="11" height="11" viewBox="0 0 11 11"><path d="M.5.5l10 10M10.5.5l-10 10" stroke="#c0c0c0" strokeWidth="1.5" /></svg>
          <svg width="13" height="11" viewBox="0 0 13 11"><path d="M1 6l4 4 7-9" stroke="#c0c0c0" strokeWidth="2" fill="none" /></svg>
          <Letter $serif $i $b>fx</Letter>
        </Buttons>
        <Input>123<Chevron w={11} sw={2.4} /></Input>
      </FormulaBar>
      <SheetArea>
        <Grid>
          <HeadRow>
            <Corner>
              <svg width="12" height="12" viewBox="0 0 12 12"><path d="M12 0v12H0z" fill="#b8b8b8" /></svg>
            </Corner>
            {COLS.map(([c, w]) => <ColHead key={c} $w={w} $on={c === "B"}>{c}</ColHead>)}
          </HeadRow>
          <SheetRows />
        </Grid>
        <HealthChart />
        <VScroll>
          <ScrollBtn><Tri dir="up" /></ScrollBtn>
          <VThumb />
          <Track />
          <ScrollBtn><Tri dir="down" /></ScrollBtn>
        </VScroll>
      </SheetArea>
      <TabBar>
        <NavBox>
          <NavArrow />
          <NavArrow right />
          <Dots>...</Dots>
        </NavBox>
        {SHEETS.map(([s, w], i) => <SheetTab key={s} $w={w} $first={i === 0}>{s}</SheetTab>)}
        <SheetTab $w={106} $noSep>Romantic_rel.</SheetTab>
        <SheetTab $w={108} $on>Health_status</SheetTab>
        <TabTools>
          <Slot $w={48} $pl={14}><Dots>...</Dots></Slot>
          <Slot $w={18}><Plus /></Slot>
          <Slot $w={37} $pl={5}><GripDots /></Slot>
        </TabTools>
        <HScroll>
          <ScrollBtn $w={15}><Tri dir="left" /></ScrollBtn>
          <HThumb />
          <Track />
          <ScrollBtn $w={15}><Tri dir="right" /></ScrollBtn>
        </HScroll>
      </TabBar>
      <Foot />
      <Watermark>
        <WmArabic>مستقل</WmArabic>
        <WmLatin>mostaql.com</WmLatin>
      </Watermark>
    </Page>
  );
}
